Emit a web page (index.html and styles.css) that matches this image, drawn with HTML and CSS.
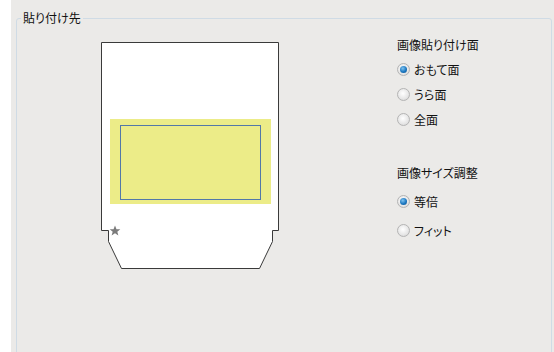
FILE: index.html
```html
<!DOCTYPE html>
<html lang="ja">
<head>
    <meta charset="UTF-8">
    <title>貼り付け先</title>
    <link rel="stylesheet" href="styles.css">
</head>
<body>
    <div class="panel">
        <fieldset class="group">
            <legend>貼り付け先</legend>
            <div class="content">
                <!-- card preview -->
                <svg class="card" width="182" height="232" viewBox="0 0 182 232">
                    <path d="M1.5 2.5 H178.5 V190.5 H172.5 V201.5 L159.5 228.5 H21.5 L8.5 201.5 V190.5 H1.5 Z" fill="#fff" stroke="#3a3a3a" stroke-width="1"/>
                    <rect x="10" y="79" width="161" height="85" fill="#ecec88"/>
                    <rect x="20.5" y="85.5" width="140" height="74" fill="none" stroke="#5378a8" stroke-width="1"/>
                    <path d="M15 185.5 L16.5 189.2 L20.3 189.3 L17.3 191.7 L18.4 195.5 L15 193.3 L11.6 195.5 L12.7 191.7 L9.7 189.3 L13.5 189.2 Z" fill="#7b7b7b"/>
                </svg>
                <div class="options">
                    <div class="heading">画像貼り付け面</div>
                    <div class="choices">
                        <label class="choice"><span class="radio checked"></span>おもて面</label>
                        <label class="choice"><span class="radio"></span>うら面</label>
                        <label class="choice"><span class="radio"></span>全面</label>
                    </div>
                    <div class="heading second">画像サイズ調整</div>
                    <div class="choices wide">
                        <label class="choice"><span class="radio checked"></span>等倍</label>
                        <label class="choice"><span class="radio"></span>フィット</label>
                    </div>
                </div>
            </div>
        </fieldset>
    </div>
</body>
</html>
```

FILE: styles.css
```css
body {
    margin: 0;
    background-color: #ffffff;
    color: #111111;
    font-family: "Noto Sans CJK JP", "Noto Sans", sans-serif;
    font-size: 12px;
    font-feature-settings: "palt";
}
.panel {
    margin-left: 11px;
    height: 352px;
    background-color: #ebeae8;
    overflow: hidden;
    padding-top: 10px;
    box-sizing: border-box;
}
.group {
    margin: 0 2px 0 5px;
    padding: 0;
    height: 400px;
    border: 1px solid #cfdbe5;
    border-radius: 3px;
    min-width: 0;
}
.group legend {
    padding: 0 2px;
    margin-left: 4px;
    line-height: 16px;
}
.content {
    display: flex;
    align-items: flex-start;
}
.card {
    display: block;
    margin: 14px 0 0 83px;
}
.options {
    margin: 11px 0 0 115px;
}
.heading {
    line-height: 16px;
}
.heading.second {
    margin-top: 33px;
}
.choices {
    margin-top: 4px;
}
.choices.wide {
    margin-top: 6px;
}
.choice {
    display: flex;
    align-items: center;
    height: 25px;
}
.choices.wide .choice {
    height: 29px;
}
.radio {
    width: 11px;
    height: 11px;
    border-radius: 50%;
    border: 1px solid #b4b4b4;
    background: radial-gradient(circle at 45% 40%, #ffffff 0%, #e6e6e6 60%, #cfcfcf 100%);
    margin-right: 4px;
    position: relative;
}
.radio.checked::after {
    content: "";
    position: absolute;
    left: 2px;
    top: 2px;
    width: 7px;
    height: 7px;
    border-radius: 50%;
    background: radial-gradient(circle at 40% 35%, #7fc3f0 0%, #1b77c0 55%, #0b4f8c 100%);
}
```
